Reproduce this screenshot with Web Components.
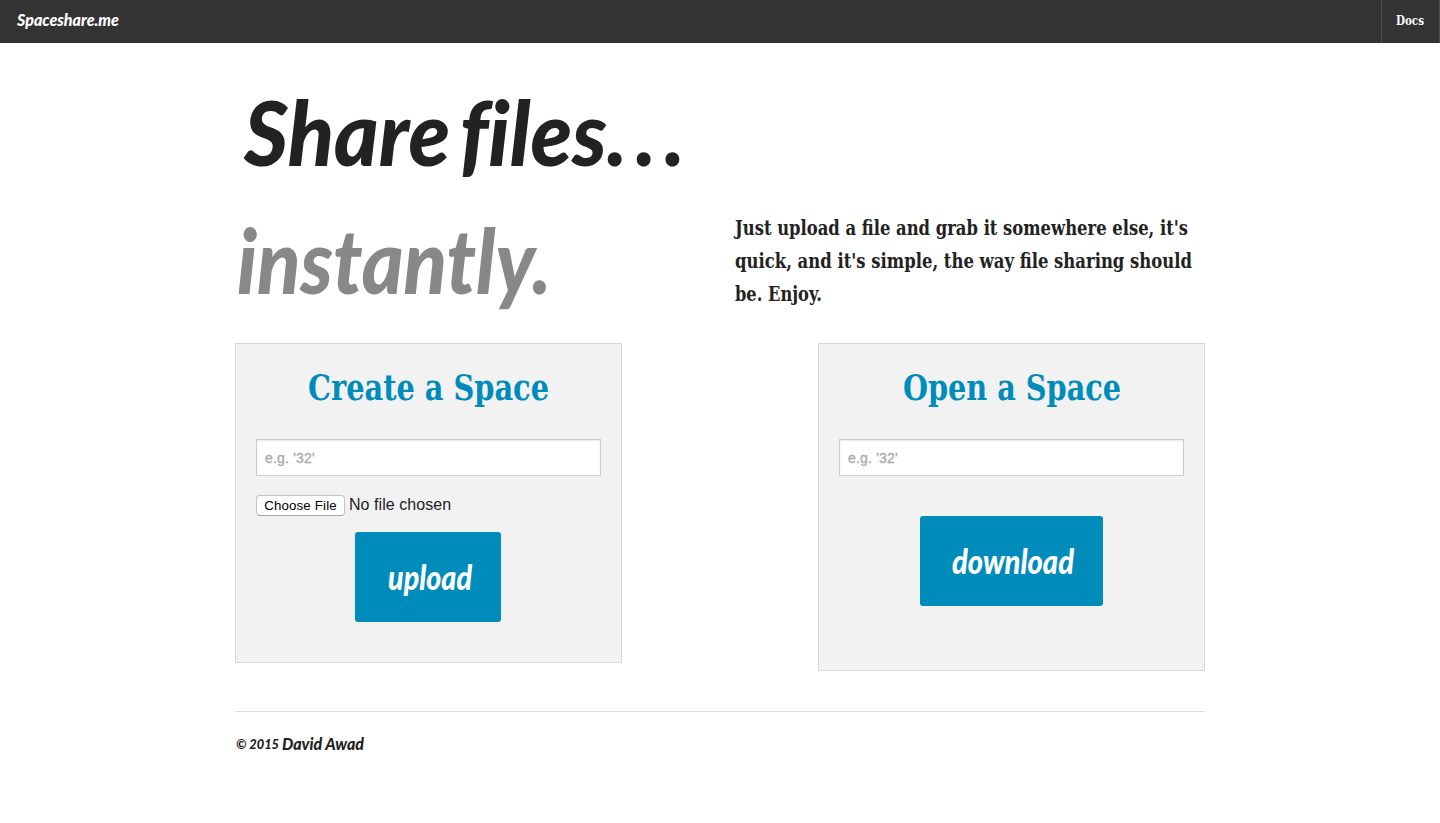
<!DOCTYPE html>
<html lang="en">
<head>
<meta charset="utf-8">
<title>Spaceshare.me</title>
<style>
  body { margin: 0; background: #fff; color: #222; font-family: "Liberation Sans", Arial, sans-serif; }
</style>
</head>
<body>
<space-app></space-app>
<script>
const define = (name, html, ready) => {
  const t = document.createElement('template');
  t.innerHTML = html;
  customElements.define(name, class extends HTMLElement {
    constructor() {
      super();
      this.attachShadow({ mode: 'open' }).append(t.content.cloneNode(true));
    }
    connectedCallback() { if (ready) ready(this, this.shadowRoot); }
  });
};

/* One line of display type, condensed to the measure given in "width". */
define('fit-text', `
<style>
  :host { display: block; white-space: nowrap; font: 700 20px/33px "DejaVu Serif Condensed", "DejaVu Serif", serif; }
  :host([face="script"]) { font-family: Lato, "Open Sans", sans-serif; font-weight: 900; font-style: italic; font-variant-ligatures: none; }
  span { display: inline-block; transform-origin: 0 50%; }
</style><span><slot></slot></span>`, (el, root) => {
  const w = +el.getAttribute('width');
  el.style.width = w + 'px';
  el.style.fontSize = el.getAttribute('size') + 'px';
  el.style.lineHeight = el.getAttribute('line') + 'px';
  const s = root.querySelector('span');
  s.style.transform = 'scaleX(' + w / s.getBoundingClientRect().width + ')';
});

define('top-bar', `
<style>
  :host { display: flex; justify-content: space-between; height: 43px; background: #333; color: #fff; }
  .brand { padding: 0 0 0 17px; }
  .docs { padding: 0 15px 0 14px; border-left: 1px solid #4d4d4d; border-right: 1px solid #4d4d4d; box-sizing: border-box; width: 59px; }
</style>
<div class="brand"><fit-text face="script" size="17" line="40" width="102">Spaceshare.me</fit-text></div>
<div class="docs"><fit-text size="12" line="42" width="28">Docs</fit-text></div>`);

define('page-hero', `
<style>
  :host { display: grid; grid-template-columns: 500px 470px; grid-template-rows: 128px 128px; align-content: start; padding-top: 24px; height: 276px; }
  .lead { grid-column: 1 / 3; padding-left: 9px; word-spacing: -9px; }
  .dots { letter-spacing: 9px; margin-right: -9px; }
  .sub { color: #888; padding-left: 2px; }
  .copy { padding-top: 17px; }
</style>
<div class="lead"><fit-text face="script" size="90" line="128" width="441">Share files<span class="dots">...</span></fit-text></div>
<div class="sub"><fit-text face="script" size="90" line="128" width="314">instantly.</fit-text></div>
<div class="copy">
  <fit-text size="19.5" line="33" width="453">Just upload a file and grab it somewhere else, it's</fit-text>
  <fit-text size="19.5" line="33" width="457">quick, and it's simple, the way file sharing should</fit-text>
  <fit-text size="19.5" line="33" width="87">be. Enjoy.</fit-text>
</div>`);

define('space-panel', `
<style>
  :host { display: flex; flex-direction: column; align-items: center; box-sizing: border-box; width: 387px; padding: 18px 20px 40px; background: #f2f2f2; border: 1px solid #d8d8d8; }
  .title { color: #008cba; margin-bottom: 25px; }
  ::slotted(*) { align-self: stretch; }
  ::slotted(action-button) { align-self: center; }
</style>
<div class="title"><slot name="title"></slot></div>
<slot></slot>`);

define('text-field', `
<style>
  :host { display: block; height: 37px; }
  input { box-sizing: border-box; width: 100%; height: 37px; margin: 0; padding: 1px 8px 0; border: 1px solid #ccc; border-radius: 0; background: #fff; box-shadow: inset 0 1px 2px rgba(0,0,0,.1); font: 14px "Liberation Sans", Arial, sans-serif; letter-spacing: .2px; outline: 0; display: block; }
  input::placeholder { color: #a9a9a9; opacity: 1; -webkit-text-stroke: .3px #a9a9a9; }
</style><input type="text" placeholder="e.g. '32'">`);

define('file-picker', `
<style>
  :host { display: flex; align-items: flex-start; gap: 4px; margin: 19px 0 16px; height: 21px; color: #222; }
  button { box-sizing: border-box; width: 89px; height: 21px; padding: 0; border: 1px solid #c4c4c4; border-bottom-color: #a6a6a6; border-radius: 4px; background: #fff; color: #000; font: 13.3px/18px "Liberation Sans", Arial, sans-serif; letter-spacing: .15px; white-space: nowrap; }
  span { font-size: 16px; line-height: 19px; letter-spacing: .05px; }
</style><button type="button">Choose File</button><span>No file chosen</span>`);

define('action-button', `
<style>
  :host { display: block; }
  button { display: flex; justify-content: center; box-sizing: border-box; height: 90px; padding: 0 0 0 3px; border: 0; border-radius: 3px; background: #008cba; color: #fff; }
</style><button type="button"><slot></slot></button>`, (el, root) => {
  root.querySelector('button').style.width = el.getAttribute('width') + 'px';
});

define('page-footer', `
<style>
  :host { display: flex; gap: 3px; margin-top: 40px; padding: 16px 0 0 1px; border-top: 1px solid #ddd; }
</style>
<fit-text face="script" size="14" line="31" width="43">© 2015</fit-text>
<fit-text face="script" size="16" line="31" width="82">David Awad</fit-text>`);

define('space-app', `
<style>
  :host { display: block; }
  main { width: 970px; margin: 0 auto; }
  .panels { display: flex; justify-content: space-between; align-items: flex-start; }
  .create { height: 320px; }
  .create action-button { margin-right: 1px; }
  .open { height: 328px; }
  .open text-field { margin-bottom: 40px; }
</style>
<top-bar></top-bar>
<main>
  <page-hero></page-hero>
  <div class="panels">
    <space-panel class="create">
      <fit-text slot="title" size="35" line="52" width="241">Create a Space</fit-text>
      <text-field></text-field>
      <file-picker></file-picker>
      <action-button width="146"><fit-text face="script" size="34" line="90" width="84">upload</fit-text></action-button>
    </space-panel>
    <space-panel class="open">
      <fit-text slot="title" size="35" line="52" width="218">Open a Space</fit-text>
      <text-field></text-field>
      <action-button width="183"><fit-text face="script" size="34" line="90" width="122">download</fit-text></action-button>
    </space-panel>
  </div>
  <page-footer></page-footer>
</main>`);
</script>
</body>
</html>
